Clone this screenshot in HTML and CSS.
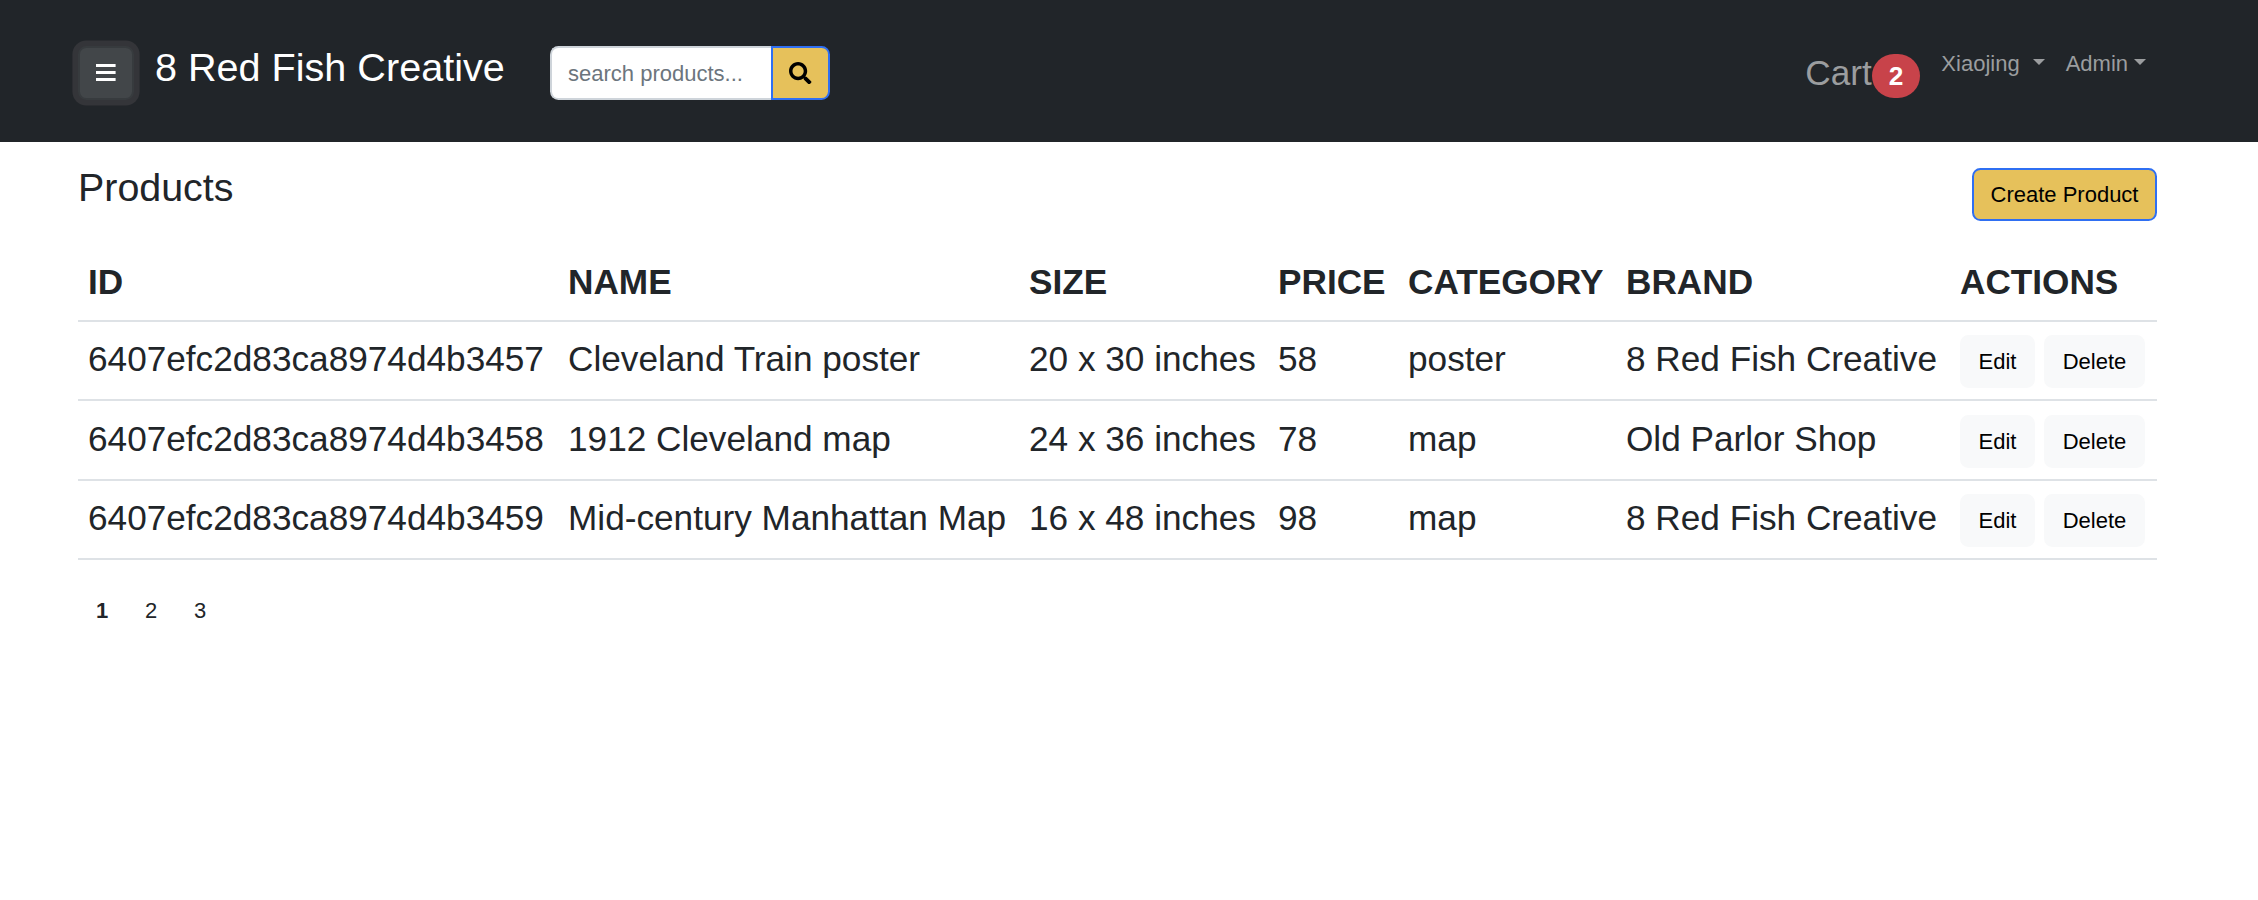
FILE: index.html
```html
<!DOCTYPE html>
<html lang="en">
<head>
<meta charset="utf-8">
<title>8 Red Fish Creative</title>
<link rel="stylesheet" href="styles.css">
</head>
<body>
<header class="navbar">
  <button class="menu-btn" aria-label="Menu">
    <svg width="20" height="20" viewBox="0 0 20 20"><path d="M0 1h19.6v3H0zM0 8h19.6v3H0zM0 15h19.6v3H0z" fill="#fff"/></svg>
  </button>
  <a class="brand">8 Red Fish Creative</a>
  <form class="search">
    <input class="search-input" type="text" placeholder="search products...">
    <button class="search-btn" type="button" aria-label="Search">
      <svg width="22.4" height="22.4" viewBox="0 0 512 512"><path d="M505 442.700L405.300 343c-4.500-4.500-10.600-7-17-7H372c27.600-35.300 44-79.700 44-128C416 93.100 322.900 0 208 0S0 93.100 0 208s93.100 208 208 208c48.300 0 92.700-16.400 128-44v16.300c0 6.400 2.500 12.500 7 17l99.700 99.700c9.400 9.400 24.600 9.400 33.900 0l28.300-28.300c9.400-9.400 9.400-24.600.1-34zM208 336c-70.700 0-128-57.200-128-128 0-70.700 57.200-128 128-128 70.700 0 128 57.200 128 128 0 70.700-57.200 128-128 128z"/></svg>
    </button>
  </form>
  <nav class="links">
    <a class="cart">Cart<span class="badge">2</span></a>
    <a class="dropdown user">Xiaojing</a>
    <a class="dropdown">Admin</a>
  </nav>
</header>
<main class="content">
  <div class="title-row">
    <h1 class="title">Products</h1>
    <button class="btn btn-primary">Create Product</button>
  </div>
  <table class="table">
    <colgroup><col class="c-id"><col class="c-name"><col class="c-size"><col class="c-price"><col class="c-category"><col class="c-brand"><col></colgroup>
    <thead>
      <tr><th>ID</th><th>NAME</th><th>SIZE</th><th>PRICE</th><th>CATEGORY</th><th>BRAND</th><th>ACTIONS</th></tr>
    </thead>
    <tbody>
      <tr><td>6407efc2d83ca8974d4b3457</td><td>Cleveland Train poster</td><td>20 x 30 inches</td><td>58</td><td>poster</td><td>8 Red Fish Creative</td><td><div class="actions"><button class="btn btn-light">Edit</button><button class="btn btn-light btn-delete">Delete</button></div></td></tr>
      <tr class="tall"><td>6407efc2d83ca8974d4b3458</td><td>1912 Cleveland map</td><td>24 x 36 inches</td><td>78</td><td>map</td><td>Old Parlor Shop</td><td><div class="actions"><button class="btn btn-light">Edit</button><button class="btn btn-light btn-delete">Delete</button></div></td></tr>
      <tr><td>6407efc2d83ca8974d4b3459</td><td>Mid-century Manhattan Map</td><td>16 x 48 inches</td><td>98</td><td>map</td><td>8 Red Fish Creative</td><td><div class="actions"><button class="btn btn-light">Edit</button><button class="btn btn-light btn-delete">Delete</button></div></td></tr>
    </tbody>
  </table>
  <nav class="pages"><a class="page current">1</a><a class="page">2</a><a class="page">3</a></nav>
</main>
</body>
</html>
```
FILE: styles.css
```css
* { box-sizing: border-box; }
body {
  margin: 0;
  background: #fff;
  color: #212529;
  font-family: "Liberation Sans", Arial, sans-serif;
  font-size: 22px;
  line-height: 1.5;
}
button, input { font: inherit; margin: 0; }
.navbar {
  display: flex;
  align-items: flex-start;
  height: 142px;
  padding: 46px 112px 0 78px;
  background: #212529;
}
.menu-btn {
  display: flex;
  align-items: center;
  justify-content: center;
  width: 56px;
  height: 54px;
  padding: 0;
  border: 2px solid #373b3e;
  border-radius: 8.4px;
  background: #424649;
  box-shadow: 0 0 0 5.6px #343539;
}
.brand {
  margin: -8px 0 0 21px;
  width: 395px;
  color: #fff;
  font-size: 39.6px;
  white-space: nowrap;
}
.search { display: flex; height: 54px; }
.search-input {
  width: 222px;
  padding: 0 16px;
  border: 2px solid #ced4da;
  border-right: 0;
  border-radius: 8.4px 0 0 8.4px;
  background: #fff;
}
.search-input::placeholder { color: #6c757d; opacity: 1; }
.search-btn {
  display: flex;
  align-items: center;
  justify-content: center;
  width: 59px;
  margin-left: -1px;
  padding: 0;
  border: 2px solid #2f6ff2;
  border-radius: 0 8.4px 8.4px 0;
  background: #e6c15b;
}
.links {
  display: flex;
  align-items: flex-start;
  margin-left: auto;
  color: #9b9d9f;
}
.cart { margin-top: 1px; font-size: 35.2px; white-space: nowrap; }
.badge {
  display: inline-block;
  padding: 9.2px 17px;
  border-radius: 22.4px;
  background: #c8434a;
  color: #fff;
  font-size: 26.25px;
  font-weight: 700;
  line-height: 1;
  vertical-align: baseline;
}
.dropdown { display: flex; margin: 1px 0 0 21px; }
.dropdown::after {
  content: "";
  height: 0;
  margin: 12px 0 0 6px;
  border-top: 6.5px solid #9b9d9f;
  border-right: 6.5px solid transparent;
  border-left: 6.5px solid transparent;
}
.user::after { margin-left: 13px; }
.content { padding: 26px 101px 0 78px; }
.title-row { display: flex; justify-content: space-between; height: 77px; }
.title { margin: -4px 0 0; font-size: 39.4px; font-weight: 400; line-height: 47px; }
.btn {
  height: 53px;
  padding: 0 16.8px;
  border: 2px solid;
  border-radius: 8.4px;
  color: #000;
  white-space: nowrap;
}
.btn-primary { width: 185px; padding: 0; border-color: #2f6ff2; background: #e6c15b; }
.btn-light { width: 75px; padding: 0; border-color: #f8f9fa; background: #f8f9fa; }
.btn-delete { width: 101px; }
.table {
  width: 2079px;
  table-layout: fixed;
  border-collapse: separate;
  border-spacing: 0;
  font-size: 35.2px;
  white-space: nowrap;
}
.c-id { width: 479px; }
.c-name { width: 461px; }
.c-size { width: 249px; }
.c-price { width: 130px; }
.c-category { width: 218px; }
.c-brand { width: 334px; }
th, td {
  height: 79px;
  padding: 0 0 2px 11px;
  border-bottom: 2px solid #dee2e6;
  text-align: left;
}
th { height: 77px; padding-bottom: 0; }
th:first-child, td:first-child { padding-left: 10px; }
.tall td { height: 80px; }
.actions { display: flex; gap: 9px; padding-top: 4px; font-size: 22px; }
.pages { display: flex; margin-top: 34px; }
.page { width: 49px; padding-left: 18px; }
.current { font-weight: 700; }
```
